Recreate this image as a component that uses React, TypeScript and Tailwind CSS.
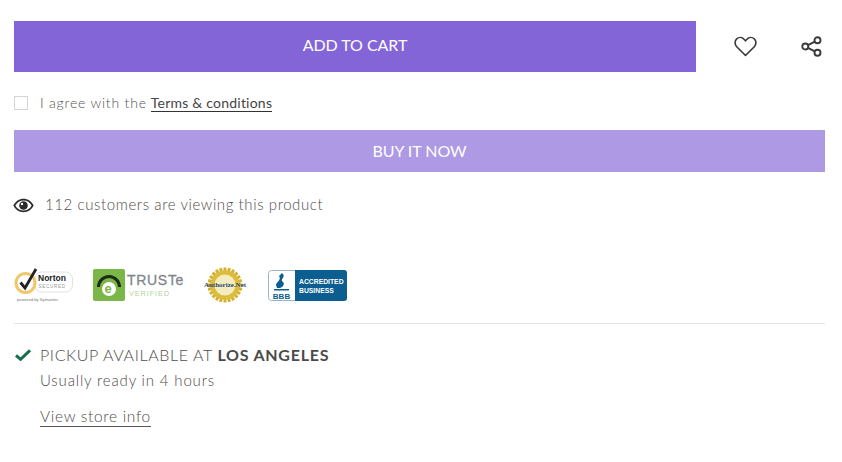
import React from "react";

const font = { fontFamily: '"Lato","Noto Sans",sans-serif' };

function Norton() {
  return (
    <svg width="60" height="34" viewBox="0 0 60 34" className="shrink-0">
      <rect x="21" y="4" width="37.500" height="20" rx="7" fill="#fff" stroke="#e2e2e2" />
      <circle cx="11.500" cy="15" r="9.500" fill="#fff" stroke="#f0c66b" strokeWidth="3" />
      <path d="M6.500 14.500l4.500 5.500L22 1" fill="none" stroke="#222" strokeWidth="2.800" />
      <text x="24" y="12.500" fontSize="8.500" fontWeight="700" fill="#222" fontFamily="Liberation Sans">Norton</text>
      <text x="24.500" y="20" fontSize="4.600" fill="#999" letterSpacing="0.700" fontFamily="Liberation Sans">SECURED</text>
      <text x="3" y="32.500" fontSize="4.200" fill="#777" fontFamily="Liberation Sans">powered by Symantec</text>
    </svg>
  );
}

function Truste() {
  return (
    <svg width="93" height="33" viewBox="0 0 93 33" className="shrink-0">
      <rect x="0" y="0" width="32" height="32" rx="2" fill="#7ab648" />
      <path d="M5.500 18a10.500 10.500 0 0 1 21 0" fill="none" stroke="#1f2a1a" strokeWidth="3" />
      <circle cx="16" cy="20" r="7" fill="#fff" />
      <text x="11.500" y="24" fontSize="13" fontWeight="700" fill="#7ab648" fontFamily="Liberation Sans">e</text>
      <text x="34" y="16" fontSize="14" fill="#80868a" letterSpacing="0.700" fontFamily="Liberation Sans" stroke="#80868a" strokeWidth="0.300">TRUSTe</text>
      <text x="36" y="26.500" fontSize="7.500" fill="#b6d39a" letterSpacing="0.800" fontFamily="Liberation Sans">VERIFIED</text>
    </svg>
  );
}

function AuthorizeNet() {
  const teeth = Array.from({ length: 24 }, (_, i) => i * 15);
  return (
    <svg width="42" height="36" viewBox="0 0 42 36" className="shrink-0">
      {teeth.map((a) => (
        <rect key={a} x="19.500" y="0.500" width="3" height="5" fill="#d4b22e" transform={`rotate(${a} 21 18)`} />
      ))}
      <circle cx="21" cy="18" r="14.500" fill="#dcbc3c" />
      <circle cx="21" cy="18" r="10.500" fill="#f4ecc0" />
      <text x="21" y="20" textAnchor="middle" fontSize="7" fontWeight="700" fill="#2c4a6b" fontFamily="Liberation Serif">Authorize.Net</text>
    </svg>
  );
}

function Bbb() {
  return (
    <svg width="79" height="31" viewBox="0 0 79 31" className="shrink-0">
      <rect x="0.500" y="0.500" width="78" height="30" rx="3" fill="#fff" stroke="#9ab4c8" />
      <path d="M27 0h49a3 3 0 0 1 3 3v25a3 3 0 0 1-3 3H27z" fill="#0b5e8f" />
      <path d="M14 3c5 4-3 6 1 9 2 2 0 5-3 6h-3l-1-3c0-3 6-5 3-9z" fill="#0b5e8f" />
      <rect x="6" y="19" width="15" height="1.500" fill="#0b5e8f" />
      <text x="13.500" y="28.500" textAnchor="middle" fontSize="8" fontWeight="700" fill="#0b5e8f" fontFamily="Liberation Sans">BBB</text>
      <text x="31" y="14" fontSize="6.800" fontWeight="700" fill="#fff" fontFamily="Liberation Sans">ACCREDITED</text>
      <text x="31" y="22.500" fontSize="6.800" fontWeight="700" fill="#fff" fontFamily="Liberation Sans">BUSINESS</text>
    </svg>
  );
}

export default function App() {
  return (
    <div className="w-[842px] h-[462px] bg-white overflow-hidden" style={font}>
      <div className="w-[811px] ml-[14px] pt-[21px] flex flex-col">
        <div className="flex items-center">
          <div className="w-[682px] h-[51px] pb-[3px] bg-[#8465d8] flex items-center justify-center text-white text-[16px] tracking-[-0.05px]">
            ADD TO CART
          </div>
          <svg className="ml-[38px]" width="23" height="21" viewBox="0 0 23 21" fill="none" stroke="#3a3a3a" strokeWidth="1.600" strokeLinejoin="round">
            <path d="M11.500 19.500 2.700 10.700C.4 8.300.6 4.900 2.700 2.900c2.300-2 5.500-1.700 7.300.3l1.500 1.600 1.500-1.600c1.800-2 5-2.300 7.300-.3 2.100 2 2.300 5.400 0 7.800z" />
          </svg>
          <svg className="ml-[44px]" width="21" height="21" viewBox="0 0 21 21" fill="none" stroke="#3a3a3a" strokeWidth="1.900">
            <circle cx="16.500" cy="4.300" r="3" />
            <circle cx="4.300" cy="10.500" r="3" />
            <circle cx="16.500" cy="16.700" r="3" />
            <path d="M7 9.100 13.800 5.700M7 11.900l6.800 3.400" />
          </svg>
        </div>

        <div className="flex items-center mt-[24px] h-[14px] text-[14px] font-light text-[#55524f] tracking-[0.8px]">
          <span className="w-[14px] h-[14px] border border-[#d4d4d4] bg-white" />
          <span className="ml-[12px] -mt-[1px]">I agree with the</span>
          <span className="ml-[4px] text-[#444] font-normal tracking-[0.22px] border-b border-[#333] leading-[17px] -mt-[1px]">Terms &amp; conditions</span>
        </div>

        <div className="mt-[20px] w-full h-[42px] bg-[#ae99e5] flex items-center justify-center text-white text-[16px] tracking-[-0.05px]">
          BUY IT NOW
        </div>

        <div className="flex items-center mt-[24px] h-[18px] text-[15px] font-light text-[#4f4c49] tracking-[0.6px]">
          <svg width="21" height="15" viewBox="0 0 21 15" className="shrink-0 -ml-[1px]">
            <path d="M.3 7.500C2.500 3.300 6.200.8 10.500.8s8 2.500 10.200 6.700c-2.200 4.200-5.900 6.700-10.200 6.700S2.500 11.700.3 7.500z" fill="#2b2b2b" />
            <path d="M2.300 7.500C4.200 4.300 7 2.400 10.500 2.400s6.300 1.900 8.200 5.100c-1.900 3.200-4.700 5.100-8.200 5.100S4.200 10.700 2.300 7.500z" fill="#fff" />
            <circle cx="10.500" cy="7.500" r="4.300" fill="#2b2b2b" />
            <circle cx="9" cy="6" r="1.200" fill="#fff" />
          </svg>
          <span className="ml-[11px] -mt-[1px]">112 customers are viewing this product</span>
        </div>

        <div className="flex items-center mt-[53px] h-[36px]">
          <Norton />
          <span className="ml-[19px]"><Truste /></span>
          <span className="ml-[18px]"><AuthorizeNet /></span>
          <span className="ml-[22px]"><Bbb /></span>
        </div>

        <div className="mt-[20px] border-t border-[#e4e4e4]" />

        <div className="flex items-center mt-[21px] h-[20px] text-[16px] font-light text-[#4f4c49] tracking-[0.62px]">
          <svg width="16" height="12" viewBox="0 0 16 12" className="shrink-0 ml-[1px]" fill="none" stroke="#16704a" strokeWidth="3">
            <path d="M1 6.300 5.600 10.300 15 1.300" />
          </svg>
          <span className="ml-[9px]">PICKUP AVAILABLE AT <b className="font-bold text-[#4a4a4a] tracking-[0.75px]">LOS ANGELES</b></span>
        </div>
        <div className="ml-[26px] mt-[5px] h-[20px] leading-[20px] text-[15px] font-light text-[#4f4c49] tracking-[0.85px]">Usually ready in 4 hours</div>
        <div className="ml-[26px] mt-[16px] text-[15.500px] font-light leading-[20px] text-[#4f4c49] tracking-[0.68px]">
          <span className="inline-block border-b border-[#555]">View store info</span>
        </div>
      </div>
    </div>
  );
}
